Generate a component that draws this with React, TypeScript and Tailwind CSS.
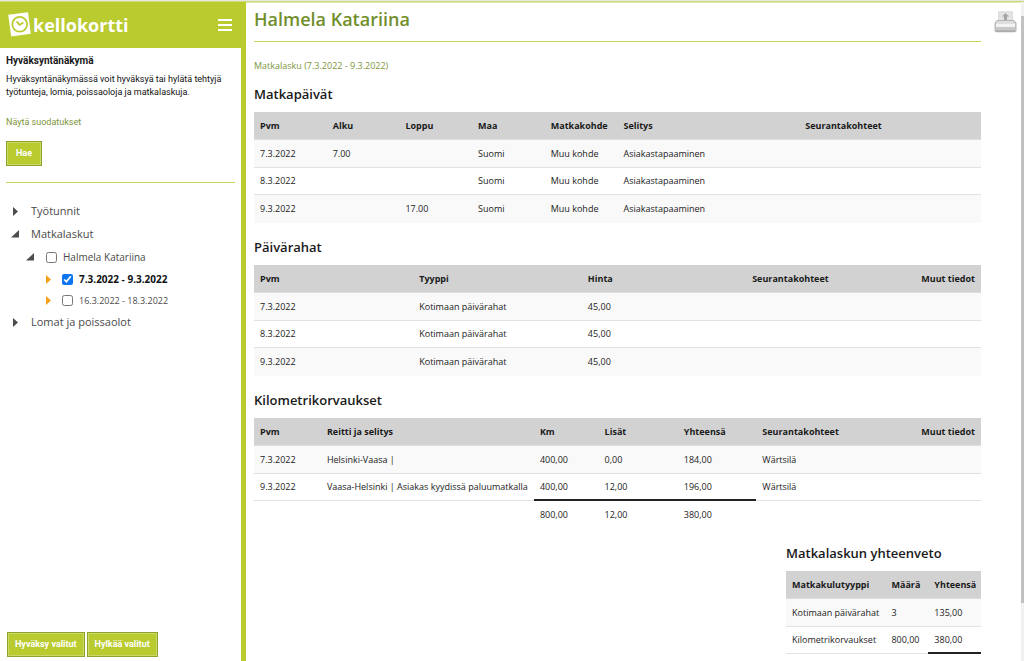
import { useState } from "react";

interface Column {
  label: string;
  width: string;
  align?: string;
}

interface Row {
  cells: string[];
  // indexes of the cells that are closed with a sum line
  summed?: number[];
  isTotal?: boolean;
}

const travelDayColumns: Column[] = [
  { label: "Pvm", width: "w-[10%]" },
  { label: "Alku", width: "w-[10%]" },
  { label: "Loppu", width: "w-[10%]" },
  { label: "Maa", width: "w-[10%]" },
  { label: "Matkakohde", width: "w-[10%]" },
  { label: "Selitys", width: "w-[25%]" },
  { label: "Seurantakohteet", width: "w-[25%]" },
];

const travelDays: Row[] = [
  { cells: ["7.3.2022", "7.00", "", "Suomi", "Muu kohde", "Asiakastapaaminen", ""] },
  { cells: ["8.3.2022", "", "", "Suomi", "Muu kohde", "Asiakastapaaminen", ""] },
  { cells: ["9.3.2022", "", "17.00", "Suomi", "Muu kohde", "Asiakastapaaminen", ""] },
];

const allowanceColumns: Column[] = [
  { label: "Pvm", width: "w-[21.9%]" },
  { label: "Tyyppi", width: "w-[23.2%]" },
  { label: "Hinta", width: "w-[22.6%]" },
  { label: "Seurantakohteet", width: "w-[22.3%]" },
  { label: "Muut tiedot", width: "w-[10%]", align: "text-right" },
];

const allowances: Row[] = [
  { cells: ["7.3.2022", "Kotimaan päivärahat", "45,00", "", ""] },
  { cells: ["8.3.2022", "Kotimaan päivärahat", "45,00", "", ""] },
  { cells: ["9.3.2022", "Kotimaan päivärahat", "45,00", "", ""] },
];

const mileageColumns: Column[] = [
  { label: "Pvm", width: "w-[9.2%]" },
  { label: "Reitti ja selitys", width: "w-[29.3%]" },
  { label: "Km", width: "w-[8.9%]" },
  { label: "Lisät", width: "w-[10.9%]" },
  { label: "Yhteensä", width: "w-[10.8%]" },
  { label: "Seurantakohteet", width: "w-[20.9%]" },
  { label: "Muut tiedot", width: "w-[10%]", align: "text-right" },
];

const mileages: Row[] = [
  { cells: ["7.3.2022", "Helsinki-Vaasa |", "400,00", "0,00", "184,00", "Wärtsilä", ""] },
  {
    cells: [
      "9.3.2022",
      "Vaasa-Helsinki | Asiakas kyydissä paluumatkalla",
      "400,00",
      "12,00",
      "196,00",
      "Wärtsilä",
      "",
    ],
    summed: [2, 3, 4],
  },
  { cells: ["", "", "800,00", "12,00", "380,00", "", ""], isTotal: true },
];

const summaryColumns: Column[] = [
  { label: "Matkakulutyyppi", width: "w-[51%]" },
  { label: "Määrä", width: "w-[22%]" },
  { label: "Yhteensä", width: "w-[27%]" },
];

const summary: Row[] = [
  { cells: ["Kotimaan päivärahat", "3", "135,00"] },
  { cells: ["Kilometrikorvaukset", "800,00", "380,00"], summed: [2] },
];

const ReportTable = ({
  title,
  columns,
  rows,
}: {
  title: string;
  columns: Column[];
  rows: Row[];
}) => (
  <section>
    <h2 className="mb-2 text-[13px] leading-5 font-semibold whitespace-nowrap text-[#1a1a1a]">
      {title}
    </h2>
    <table
      aria-label={title}
      className="w-full table-fixed border-separate border-spacing-0 text-left text-[9px] leading-4 whitespace-nowrap"
    >
      <thead>
        <tr>
          {columns.map((col) => (
            <th
              key={col.label}
              className={`h-7 border-b border-[#dedede] bg-[#d2d2d2] px-1.5 py-0 font-bold text-[#1a1a1a] ${col.width} ${
                col.align || ""
              }`}
            >
              {col.label}
            </th>
          ))}
        </tr>
      </thead>
      <tbody>
        {rows.map((row, rowIndex) => (
          <tr
            key={rowIndex}
            className={`group ${row.isTotal ? "" : "odd:bg-[#f9f9f9]"}`}
          >
            {row.cells.map((cell, i) => (
              <td
                key={i}
                className={`h-7 px-1.5 py-0 text-[#222] group-even:h-[27px] ${
                  row.summed?.includes(i)
                    ? "border-b-2 border-[#222]"
                    : "border-b border-[#e2e2e2] group-last:group-odd:border-transparent"
                }`}
              >
                {cell}
              </td>
            ))}
          </tr>
        ))}
      </tbody>
    </table>
  </section>
);

const Logo = () => (
  <a href="#" aria-label="kellokortti" className="flex items-center text-white">
    <svg viewBox="0 0 24 26" className="h-[26px] w-6" aria-hidden="true">
      <path d="M0.2 2.8 20 0.2 22.8 21.8 3.2 24.4Z" fill="#fff" />
      <circle cx="11.7" cy="12.3" r="7.4" fill="none" stroke="#b9cb2f" strokeWidth="1.8" />
      <path d="M8.6 9.4 11.6 12.9 15.4 10.5" fill="none" stroke="#b9cb2f" strokeWidth="1.8" />
    </svg>
    <span className="ml-px font-['Open_Sans',sans-serif] text-lg leading-6 font-bold">
      kellokortti
    </span>
  </a>
);

const PrinterIcon = () => (
  <svg viewBox="0 0 24 22" className="h-[22px] w-6" aria-hidden="true">
    <path d="M4.5 0.8H18.5V12H4.5Z" fill="#e4e4e4" stroke="#dadada" />
    <path d="M11.5 2 15 5.4H13V9H10V5.4H8Z" fill="#a5a5a5" />
    <path d="M3 9.5H20L22 12V19.5Q22 20.8 20.7 20.8H2.3Q1 20.8 1 19.5V12Z" fill="#c9c9c9" stroke="#b4b4b4" />
    <path d="M4 10H19L20.5 12H2.5Z" fill="#dedede" />
    <path d="M2 12.5H21V16H2Z" fill="#f4f4f4" />
    <path d="M2 20H21" stroke="#9a9a9a" />
  </svg>
);

const Arrow = ({ open, small }: { open?: boolean; small?: boolean }) => (
  <svg
    viewBox="0 0 8 10"
    className={`h-2.5 w-2 ${small ? "text-[#f7a11b]" : "text-[#4d4d4d]"}`}
    aria-hidden="true"
  >
    <path d={open ? "M8 0V7.5H0Z" : "M2 0 7 4.5 2 9Z"} fill="currentColor" />
  </svg>
);

const buttonClass =
  "cursor-pointer border border-[#8fa32a] bg-[#b9cb2f] font-[Roboto,Arial,sans-serif] text-[9px] font-bold text-white inset-ring inset-ring-[#cbd96a]";

const checkboxClass = "m-0 size-[11px] accent-[#0d75f0]";

export default function App() {
  const [userChecked, setUserChecked] = useState(false);
  const [firstChecked, setFirstChecked] = useState(true);
  const [secondChecked, setSecondChecked] = useState(false);

  return (
    <div className="flex h-screen flex-col overflow-hidden border-t border-[#e6e8e0] bg-white font-['Open_Sans','Noto_Sans',sans-serif] text-[#333]">
      <div className="flex min-h-0 flex-1 border-t border-[#cfdc7c]">
        {/* Sidebar */}
        <aside className="flex w-[246px] shrink-0 flex-col border-r-5 border-[#b9cb2f]">
          <header className="flex h-[46px] shrink-0 items-center justify-between bg-[#b9cb2f] pr-[9px] pl-2">
            <Logo />
            <button type="button" aria-label="Valikko" className="flex w-3.5 cursor-pointer flex-col gap-[3px]">
              <span className="h-0.5 bg-white"></span>
              <span className="h-0.5 bg-white"></span>
              <span className="h-0.5 bg-white"></span>
            </button>
          </header>

          <div className="mx-1.5 font-[Roboto,Arial,sans-serif]">
            <h3 className="mt-[5px] text-[10px] leading-4 font-bold text-[#1a1a1a]">
              Hyväksyntänäkymä
            </h3>
            <p className="mt-1 text-[9px] leading-[13px] text-[#111]">
              Hyväksyntänäkymässä voit hyväksyä tai hylätä tehtyjä työtunteja,
              lomia, poissaoloja ja matkalaskuja.
            </p>
            <a href="#" className="mt-[15px] block text-[9px] leading-4 text-[#7d963c]">
              Näytä suodatukset
            </a>
            <button type="button" className={`mt-[11px] block h-[25px] w-9 ${buttonClass}`}>
              Hae
            </button>
            <hr className="mt-4 border-t border-[#c6d65a]" />
          </div>

          {/* Tree */}
          <ul className="mt-[17px] text-[11px] text-[#4a4a4a]">
            <li className="flex h-[23px] items-center gap-3 pl-[11px]">
              <Arrow />
              Työtunnit
            </li>
            <li>
              <div className="flex h-[23px] items-center gap-3 pl-[11px]">
                <Arrow open />
                Matkalaskut
              </div>
              <ul className="text-[10px]">
                <li>
                  <div className="flex h-[23px] items-center gap-3 pl-[26px]">
                    <Arrow open />
                    <label className="flex items-center gap-1.5">
                      <input
                        type="checkbox"
                        className={checkboxClass}
                        checked={userChecked}
                        onChange={(e) => setUserChecked(e.target.checked)}
                      />
                      Halmela Katariina
                    </label>
                  </div>
                  <ul>
                    <li className="flex h-[21px] items-center gap-2.5 pl-11">
                      <Arrow small />
                      <label className="flex items-center gap-1.5 font-bold text-[#111]">
                        <input
                          type="checkbox"
                          className={checkboxClass}
                          checked={firstChecked}
                          onChange={(e) => setFirstChecked(e.target.checked)}
                        />
                        7.3.2022 - 9.3.2022
                      </label>
                    </li>
                    <li className="flex h-[21px] items-center gap-2.5 pl-11">
                      <Arrow small />
                      <label className="flex items-center gap-1.5 text-[9px]">
                        <input
                          type="checkbox"
                          className={checkboxClass}
                          checked={secondChecked}
                          onChange={(e) => setSecondChecked(e.target.checked)}
                        />
                        16.3.2022 - 18.3.2022
                      </label>
                    </li>
                  </ul>
                </li>
              </ul>
            </li>
            <li className="flex h-[23px] items-center gap-3 pl-[11px]">
              <Arrow />
              Lomat ja poissaolot
            </li>
          </ul>

          <div className="mt-auto flex gap-0.5 pb-1 pl-[7px]">
            <button type="button" className={`h-[25px] px-[7px] ${buttonClass}`}>
              Hyväksy valitut
            </button>
            <button type="button" className={`h-[25px] px-[7px] ${buttonClass}`}>
              Hylkää valitut
            </button>
          </div>
        </aside>

        {/* Report */}
        <main className="min-w-0 flex-1 overflow-hidden border-t border-[#dfe8a8] pl-2">
          <h1 className="pt-1 pb-2.5 text-lg leading-6 font-semibold text-[#718f2c]">
            Halmela Katariina
          </h1>
          <hr className="border-t border-[#c6d65a]" />
          <a href="#" className="mt-4 block text-[9px] leading-4 text-[#7d963c]">
            Matkalasku (7.3.2022 - 9.3.2022)
          </a>
          <div className="mt-2.5 flex flex-col gap-3.5">
            <ReportTable title="Matkapäivät" columns={travelDayColumns} rows={travelDays} />
            <ReportTable title="Päivärahat" columns={allowanceColumns} rows={allowances} />
            <ReportTable title="Kilometrikorvaukset" columns={mileageColumns} rows={mileages} />
            <div className="w-[195px] self-end">
              <ReportTable title="Matkalaskun yhteenveto" columns={summaryColumns} rows={summary} />
            </div>
          </div>
        </main>

        <div className="w-10 shrink-0 border-t border-[#dfe8a8] pt-2 pl-[13px]">
          <button type="button" aria-label="Tulosta" className="block cursor-pointer">
            <PrinterIcon />
          </button>
        </div>
        <div className="w-[3px] shrink-0 bg-[#f1f1f1] pt-3.5">
          <div className="h-[91%] bg-[#c1c1c1]"></div>
        </div>
      </div>
    </div>
  );
}
